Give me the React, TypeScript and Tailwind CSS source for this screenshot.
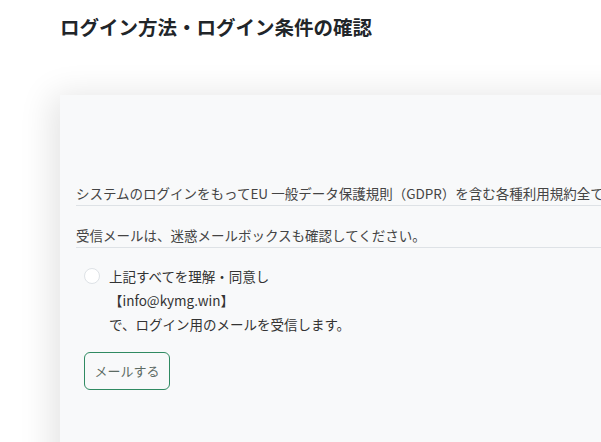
export default function App() {
  return (
    <div className="h-[442px] w-[601px] overflow-hidden bg-white font-['Noto_Sans_CJK_JP',sans-serif]">
      <h1 className="pl-[60px] pt-[12px] text-[19.5px] font-bold leading-[30px] text-[#212529]">
        ログイン方法・ログイン条件の確認
      </h1>

      <div className="ml-[60px] mt-[53px] h-[420px] w-[640px] bg-[#f8f9fa] pl-4 pt-[86px] shadow-[-8px_0_32px_rgba(0,0,0,0.11)]">
        <p className="whitespace-nowrap border-b border-[#dee2e6] text-[13.5px] leading-[24px] text-[#444]">
          システムのログインをもってEU 一般データ保護規則（GDPR）を含む各種利用規約全てに同意したものとみなします。
        </p>
        <p className="mt-[17px] whitespace-nowrap border-b border-[#dee2e6] text-[13.5px] leading-[24px] text-[#444]">
          受信メールは、迷惑メールボックスも確認してください。
        </p>

        <label className="mt-4 ml-2 flex items-start gap-[9px]">
          <span className="mt-[4px] h-4 w-4 shrink-0 rounded-full border border-[#dee2e6] bg-white" />
          <span className="text-[13.5px] leading-[24px] text-[#333]">
            上記すべてを理解・同意し
            <br />
            【info@kymg.win】
            <br />
            で、ログイン用のメールを受信します。
          </span>
        </label>

        <button className="ml-2 mt-4 h-[38px] w-[86px] rounded-md border border-[#2f8a62] text-[13px] text-[#5c6b64]">
          メールする
        </button>
      </div>
    </div>
  )
}
